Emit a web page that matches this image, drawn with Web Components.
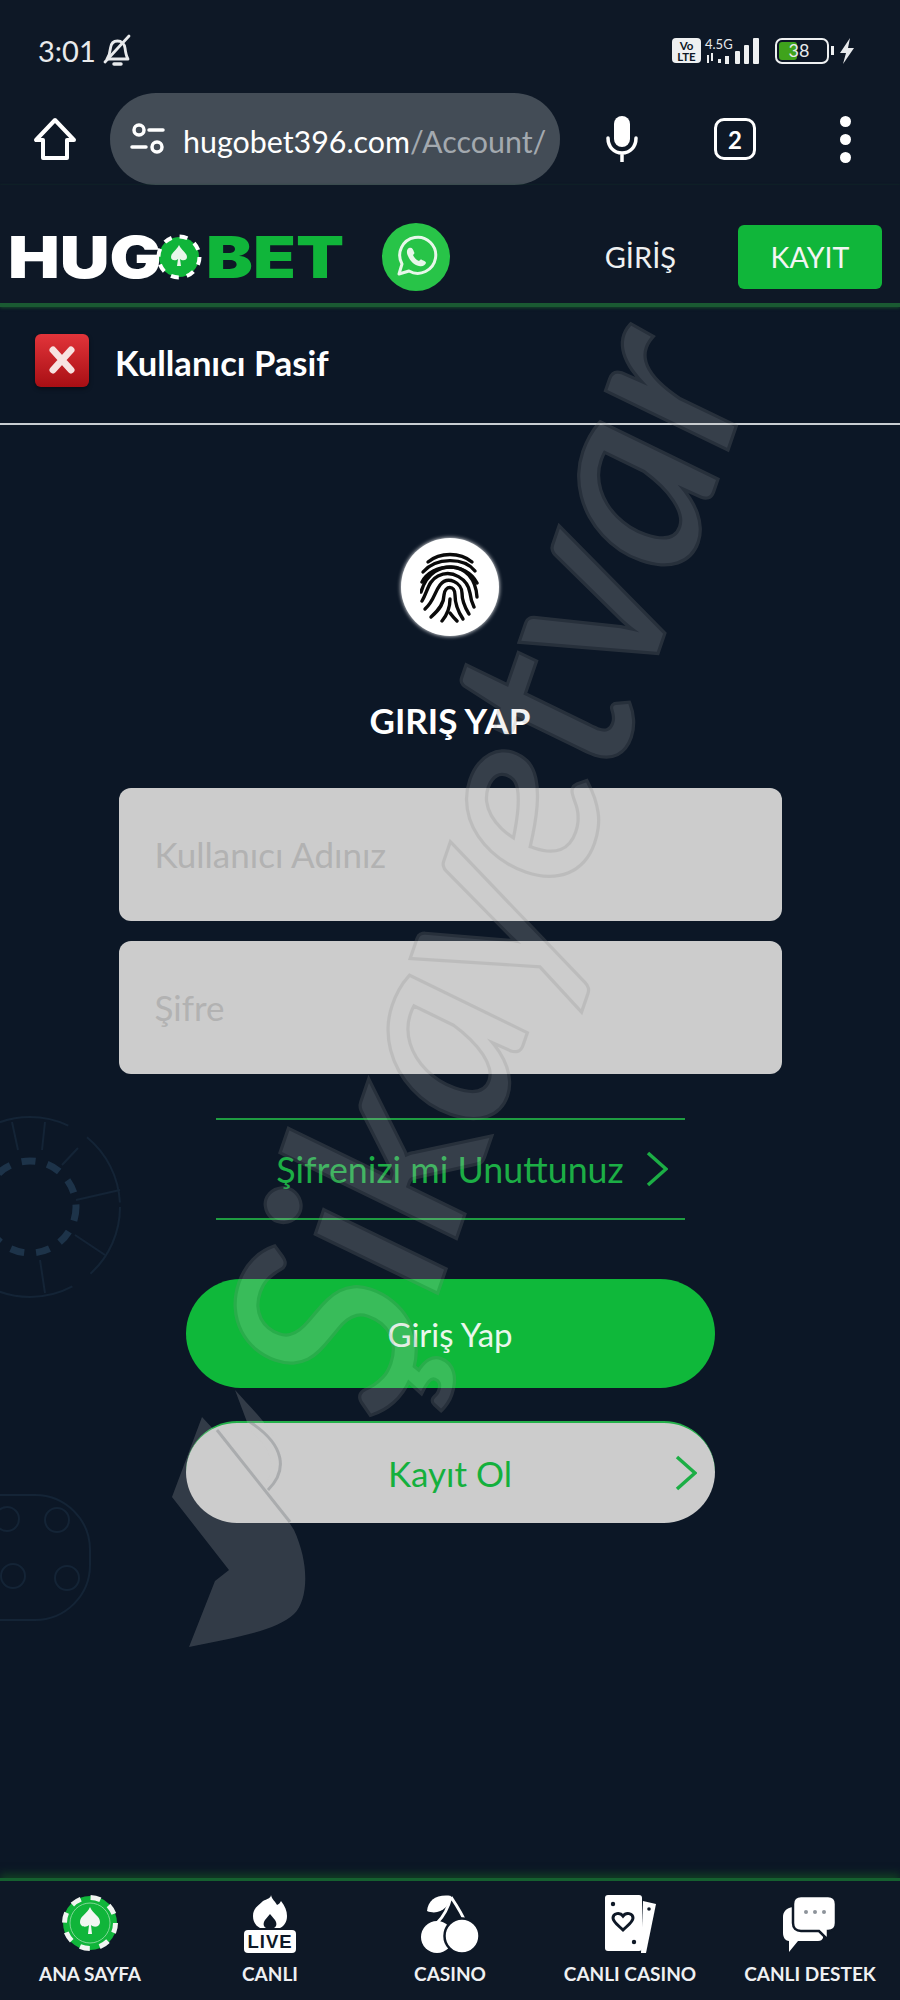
<!DOCTYPE html>
<html lang="tr">
<head>
<meta charset="utf-8">
<title>Hugobet</title>
<style>
  html, body { margin: 0; background: #0c1726; }
  body { width: 900px; height: 2000px; overflow: hidden; font-family: "Lato", "Noto Sans", sans-serif; color: #fff; }
  app-shell { height: 2000px; }
</style>
</head>
<body>
<app-shell>
  <status-bar></status-bar>
  <browser-bar></browser-bar>
  <site-header></site-header>
  <alert-row>Kullanıcı Pasif</alert-row>
  <login-form></login-form>
  <bottom-nav>
    <nav-item icon="chip">ANA SAYFA</nav-item>
    <nav-item icon="live">CANLI</nav-item>
    <nav-item icon="cherry">CASINO</nav-item>
    <nav-item icon="cards">CANLI CASINO</nav-item>
    <nav-item icon="chat">CANLI DESTEK</nav-item>
  </bottom-nav>
  <watermark-layer></watermark-layer>
</app-shell>

<script>
class AppShell extends HTMLElement {
  connectedCallback() {
    this.attachShadow({ mode: 'open' });
    this.shadowRoot.innerHTML = `
      <style>
        :host { display: flex; flex-direction: column; position: relative; width: 900px; overflow: hidden; }
      </style>
      <slot></slot>
    `;
  }
}

class StatusBar extends HTMLElement {
  connectedCallback() {
    this.attachShadow({ mode: 'open' });
    this.shadowRoot.innerHTML = `
      <style>
        :host { display: flex; align-items: center; justify-content: space-between; height: 93px; box-sizing: border-box; padding: 8px 45px 0 38px; background: #0e1826; color: #e8eaec; }
        .left { display: flex; align-items: center; gap: 6px; font-size: 29px; }
        .right { display: flex; align-items: center; }
        .volte { width: 29px; height: 25px; background: #eef0f1; border-radius: 4px; color: #0e1826; font-size: 11.500px; font-weight: 700; line-height: 11px; text-align: center; padding-top: 2px; box-sizing: border-box; }
        .net { display: flex; flex-direction: column; width: 30px; margin-left: 4px; font-size: 13px; line-height: 13px; }
        .bat { position: relative; width: 54px; height: 26px; margin-left: 13px; border: 2.500px solid #eef0f1; border-radius: 7px; box-sizing: border-box; font-size: 18px; line-height: 21px; text-align: center; overflow: hidden; padding-right: 6px; }
        .bat i { position: absolute; left: 2px; top: 2px; bottom: 2px; width: 18px; background: #3fa31c; border-radius: 3px; }
        .bat span { position: relative; }
        .nub { width: 3px; height: 9px; background: #eef0f1; margin: 0 5px 0 2px; }
      </style>
      <div class="left">
        <span>3:01</span>
        <svg width="32" height="34" viewBox="0 0 32 34" fill="none" stroke="#e8eaec" stroke-width="2.800" stroke-linejoin="round" stroke-linecap="round">
          <path d="M5 25c2-3 3-6 3.500-11 .5-4 3-7 7-7s7 3 7.500 7c.5 4 1 8 3 11z"/>
          <path d="M12 30h7" stroke-width="3.500"/>
          <path d="M3 28 27 2"/>
        </svg>
      </div>
      <div class="right">
        <div class="volte">Vo<br>LTE</div>
        <div class="net">
          <span>4.5G</span>
          <svg width="30" height="13" viewBox="0 0 30 13" fill="#eef0f1"><path d="M2 4h2v8H2zM6 2h2v8H6zM13 8h3v4h-3zM20 5h4v8h-4z"/></svg>
        </div>
        <svg width="27" height="26" viewBox="0 0 27 26" fill="#eef0f1"><rect x="0" y="13" width="5" height="13" rx="1"/><rect x="9" y="7" width="5" height="19" rx="1"/><rect x="18" y="0" width="6" height="26" rx="1"/></svg>
        <div class="bat"><i></i><span>38</span></div>
        <div class="nub"></div>
        <svg width="16" height="26" viewBox="0 0 16 26" fill="#e8eaec"><path d="M11 0 1 15h6l-3 11 11-16H9z"/></svg>
      </div>
    `;
  }
}

class BrowserBar extends HTMLElement {
  connectedCallback() {
    this.attachShadow({ mode: 'open' });
    this.shadowRoot.innerHTML = `
      <style>
        :host { display: flex; align-items: center; height: 92px; background: #0e1826; }
        .home { width: 110px; display: flex; justify-content: center; }
        .pill { width: 450px; height: 92px; box-sizing: border-box; border-radius: 46px; background: #434c56; display: flex; align-items: center; padding-left: 20px; overflow: hidden; }
        .url { margin-left: 17px; padding-top: 3px; font-size: 30.400px; white-space: nowrap; color: #fff; }
        .url span { color: #a3a9af; }
        .mic { margin-left: 44px; width: 36px; display: flex; justify-content: center; }
        .tabs { margin-left: 74px; width: 42px; height: 42px; box-sizing: border-box; border: 3.500px solid #fff; border-radius: 10px; display: flex; align-items: center; justify-content: center; font-size: 24px; font-weight: 700; }
        .dots { margin-left: 84px; display: flex; flex-direction: column; gap: 7px; }
        .dots i { width: 11px; height: 11px; border-radius: 50%; background: #fff; }
      </style>
      <div class="home">
        <svg width="44" height="44" viewBox="0 0 44 44" fill="none" stroke="#fff" stroke-width="4" stroke-linejoin="round"><path d="M22 3 3 23h7v18h24V23h7z"/></svg>
      </div>
      <div class="pill">
        <svg width="36" height="34" viewBox="0 0 36 34" fill="none" stroke="#fff" stroke-width="3.500" stroke-linecap="round"><circle cx="9" cy="8" r="5"/><path d="M19 8h14M2 25h14"/><circle cx="27" cy="25" r="5"/></svg>
        <div class="url">hugobet396.com<span>/Account/</span></div>
      </div>
      <div class="mic">
        <svg width="34" height="46" viewBox="0 0 34 46"><rect x="9" y="0" width="16" height="31" rx="8" fill="#fff"/><path d="M3 22c0 9 6 15 14 15s14-6 14-15M17 37v9" fill="none" stroke="#fff" stroke-width="3.500" stroke-linecap="round"/></svg>
      </div>
      <div class="tabs">2</div>
      <div class="dots"><i></i><i></i><i></i></div>
    `;
  }
}

class SiteHeader extends HTMLElement {
  connectedCallback() {
    this.attachShadow({ mode: 'open' });
    this.shadowRoot.innerHTML = `
      <style>
        :host { display: flex; align-items: center; height: 122px; box-sizing: border-box; padding: 25px 18px 0 8px; background: #0e1826; border-bottom: 4px solid #1a5a32; box-shadow: 0 1px 3px #15492a; position: relative; }
        .logo { display: flex; align-items: center; width: 337px; font-family: "Inter", "Liberation Sans", sans-serif; font-weight: 900; font-size: 58px; line-height: 46px; }
        .logo span { display: inline-block; transform-origin: left center; }
        .hug { color: #fff; width: 148px; transform: scaleX(1.19); }
        .bet { color: #10b53a; transform: scaleX(1.21); }
        .wa { margin-left: 37px; }
        .login { margin-left: auto; margin-right: 62px; font-size: 29px; color: #eef0f1; }
        .signup { width: 144px; height: 64px; border-radius: 6px; background: #10b63a; color: #f3f5f4; display: flex; align-items: center; justify-content: center; font-size: 28.500px; }
      </style>
      <div class="logo">
        <span class="hug">HUG</span>
        <svg width="46" height="46" viewBox="0 0 46 46" style="flex:none;margin:0 4px 0 0">
          <circle cx="23" cy="23" r="20" fill="#10b53a"/>
          <circle cx="23" cy="23" r="20.500" fill="none" stroke="#fff" stroke-width="4" stroke-dasharray="8 8.100"/>
          <path d="M23 11c3 6 8 8 8 12 0 4-5 4-7 2l1 7h-4l1-7c-2 2-7 2-7-2 0-4 5-6 8-12z" fill="#e9f6eb"/>
        </svg>
        <span class="bet">BET</span>
      </div>
      <svg class="wa" width="68" height="68" viewBox="0 0 68 68">
        <circle cx="34" cy="34" r="34" fill="#28c448"/>
        <path d="M17 51l3-10a18 18 0 1 1 7 7z" fill="none" stroke="#e8f7ea" stroke-width="3" stroke-linejoin="round"/>
        <path d="M27 25c-2 1-3 4-1 8 2 5 6 9 11 10 4 1 6-1 7-3 0-1-1-2-4-3-1-1-2 0-3 1-3-1-5-4-6-6 1-1 2-2 1-3-1-3-2-5-5-4z" fill="#e8f7ea"/>
      </svg>
      <div class="login">GİRİŞ</div>
      <div class="signup">KAYIT</div>
    `;
  }
}

class AlertRow extends HTMLElement {
  connectedCallback() {
    this.attachShadow({ mode: 'open' });
    this.shadowRoot.innerHTML = `
      <style>
        :host { display: flex; align-items: center; height: 118px; box-sizing: border-box; padding: 0 0 5px 35px; border-bottom: 2px solid #c9ced2; font-size: 34.500px; font-weight: 700; color: #fff; }
        .x { width: 54px; height: 53px; margin: -5px 26px 0 0; border-radius: 6px; background: linear-gradient(#e2343a, #a80f14); display: flex; align-items: center; justify-content: center; box-shadow: 0 2px 4px #0006; }
      </style>
      <div class="x">
        <svg width="28" height="28" viewBox="0 0 28 28" stroke="#f7e3e1" stroke-width="7" stroke-linecap="round"><path d="M5 4 23 24M23 4 5 24"/></svg>
      </div>
      <slot></slot>
    `;
  }
}

class LoginForm extends HTMLElement {
  connectedCallback() {
    this.attachShadow({ mode: 'open' });
    this.shadowRoot.innerHTML = `
      <style>
        :host { flex: 1; display: flex; flex-direction: column; align-items: center; padding-top: 113px; position: relative; background: #0c1726; }
        .deco { position: absolute; left: 0; top: 0; }
        .print { width: 98px; height: 98px; border-radius: 50%; background: #fff; display: flex; align-items: center; justify-content: center; box-shadow: 0 0 4px #fff; position: relative; }
        h2 { margin: 63px 0 0; font-size: 35px; line-height: 42px; font-weight: 700; color: #fff; position: relative; }
        .field { width: 663px; height: 133px; box-sizing: border-box; border-radius: 12px; background: #cccccc; padding: 0 0 2px 36px; display: flex; align-items: center; font-size: 35px; color: #b2b2b2; font-weight: 400; position: relative; }
        .user { margin-top: 47px; }
        .pass { margin-top: 20px; }
        .forgot { width: 469px; height: 102px; margin-top: 44px; box-sizing: border-box; border-top: 2px solid #1f9c41; border-bottom: 2px solid #1f9c41; display: flex; align-items: center; justify-content: center; gap: 22px; color: #1cae45; font-size: 35.800px; padding-left: 44px; position: relative; }
        .btn { width: 529px; box-sizing: border-box; display: flex; align-items: center; justify-content: center; font-size: 33px; position: relative; }
        .go { height: 109px; margin-top: 59px; border-radius: 55px; background: #0fb83a; color: #eaf7ec; }
        .join { height: 102px; margin-top: 33px; border-radius: 51px; background: #cccccc; border-top: 2px solid #24b04a; color: #14b03d; font-size: 35px; }
        .join svg { position: absolute; right: 18px; top: 32px; }
      </style>
      <svg class="deco" width="900" height="1455" viewBox="0 425 900 1455" fill="none">
        <g stroke="#142436" stroke-width="2">
          <circle cx="30" cy="1207" r="90" stroke-dasharray="75 22"/>
          <path d="M12 1122 18 1150M45 1122 42 1150M78 1148 62 1165M120 1190 76 1200M105 1255 75 1235M45 1293 40 1260"/>
          <rect x="-60" y="1495" width="150" height="125" rx="55"/>
          <circle cx="7" cy="1519" r="12"/><circle cx="57" cy="1520" r="12"/><circle cx="13" cy="1576" r="12"/><circle cx="67" cy="1578" r="12"/>
        </g>
        <circle cx="30" cy="1207" r="46" stroke="#1d3349" stroke-width="7" stroke-dasharray="14 12"/>
      </svg>
      <div class="print">
        <svg width="60" height="72" viewBox="0 0 60 72" fill="none" stroke="#0a0a0a" stroke-width="3.400" stroke-linecap="round">
          <path d="M8 11C20 1 40 1 52 11"/>
          <path d="M3 21C16 6 44 6 55 20"/>
          <path d="M2 31C12 12 46 10 57 32"/>
          <path d="M1 41C7 20 22 16 31 16 45 16 56 28 57 46"/>
          <path d="M2 50C8 40 8 30 18 25 32 18 48 28 50 42 51 50 53 54 54 56"/>
          <path d="M5 58C14 50 14 42 20 34 28 24 42 32 42 42 42 52 46 58 49 63"/>
          <path d="M11 66C20 58 24 52 24 44 25 34 35 34 35 44 35 54 39 62 43 68"/>
          <path d="M22 70C27 64 30 58 30 48"/>
          <path d="M30 62C33 66 35 68 37 70"/>
        </svg>
      </div>
      <h2>GIRIŞ YAP</h2>
      <div class="field user">Kullanıcı Adınız</div>
      <div class="field pass">Şifre</div>
      <div class="forgot">
        <span>Şifrenizi mi Unuttunuz</span>
        <svg width="22" height="36" viewBox="0 0 22 36" fill="none" stroke="#1cae45" stroke-width="3.500"><path d="M2 2 20 18 2 34"/></svg>
      </div>
      <div class="btn go">Giriş Yap</div>
      <div class="btn join">Kayıt Ol
        <svg width="22" height="36" viewBox="0 0 22 36" fill="none" stroke="#1cae45" stroke-width="3.500"><path d="M2 2 20 18 2 34"/></svg>
      </div>
    `;
  }
}

class BottomNav extends HTMLElement {
  connectedCallback() {
    this.attachShadow({ mode: 'open' });
    this.shadowRoot.innerHTML = `
      <style>
        :host { display: grid; grid-template-columns: repeat(5, 1fr); height: 122px; box-sizing: border-box; padding-top: 14px; background: #0e1826; border-top: 3px solid #15602f; box-shadow: 0 -4px 8px #123f24; position: relative; }
      </style>
      <slot></slot>
    `;
  }
}

const NAV_ICONS = {
  chip: `<svg width="56" height="56" viewBox="0 0 56 56">
      <circle cx="28" cy="28" r="27" fill="#10b53a"/>
      <circle cx="28" cy="28" r="25.500" fill="none" stroke="#f1f4f1" stroke-width="5" stroke-dasharray="10 10"/>
      <circle cx="28" cy="28" r="20" fill="none" stroke="#7fd695" stroke-width="1"/>
      <path d="M28 12c3 7 10 9 10 15 0 5-6 6-9 3l1 9h-4l1-9c-3 3-9 2-9-3 0-6 7-8 10-15z" fill="#f1f6f2"/>
    </svg>`,
  live: `<svg width="56" height="58" viewBox="0 0 56 58">
      <path d="M29 0c1 5 5 7 6 10 2-1 3-2 4-4 4 5 6 10 6 15 0 6-3 10-7 12h-6c3-2 3-5 1-8l-5-6-5 6c-2 3-2 6 1 8h-6c-4-2-7-6-7-12 0-8 6-11 10-15 4-2 8-3 8-6z" fill="#fff"/>
      <rect x="2" y="35" width="52" height="23" rx="4" fill="#fff"/>
      <text x="28" y="53" text-anchor="middle" font-family="Liberation Sans, sans-serif" font-weight="700" font-size="18.500" letter-spacing="1" fill="#0e1826">LIVE</text>
    </svg>`,
  cherry: `<svg width="60" height="58" viewBox="0 0 60 58">
      <path d="M7 16C8 5 17-1 31 1 30 12 19 21 7 16z" fill="#fff"/>
      <path d="M31 2c6 9 12 18 15 27M31 2C28 14 23 22 17 28" fill="none" stroke="#fff" stroke-width="3"/>
      <circle cx="17" cy="42" r="16" fill="#fff"/>
      <circle cx="42" cy="41" r="17.500" fill="#fff" stroke="#0e1826" stroke-width="2.500"/>
    </svg>`,
  cards: `<svg width="56" height="58" viewBox="0 0 56 58">
      <path d="M41 6 54 9 44 58h-5z" fill="#fff"/>
      <rect x="3" y="0" width="37" height="56" rx="3" fill="#fff"/>
      <path d="M21 35c-4-4-10-8-10-12 0-5 7-6 10-2 3-4 10-3 10 2 0 4-6 8-10 12z" fill="none" stroke="#0e1826" stroke-width="3"/>
      <circle cx="11" cy="9" r="2.200" fill="#0e1826"/><circle cx="32" cy="47" r="2.200" fill="#0e1826"/><circle cx="47" cy="14" r="1.800" fill="#0e1826"/>
    </svg>`,
  chat: `<svg width="56" height="58" viewBox="0 0 56 58">
      <path d="M11 12C4 13 1 17 1 22v16c0 5 3 8 6 8v11l9-11h20c3 0 4-1 5-3V12z" fill="#fff"/>
      <path d="M19 1h27c5 0 8 3 8 8v19c0 5-3 8-8 8v9l-9-9H19c-5 0-8-3-8-8V9c0-5 3-8 8-8z" fill="#fff" stroke="#0e1826" stroke-width="2.500"/>
      <circle cx="24" cy="17" r="2" fill="#8d939a"/><circle cx="33" cy="17" r="2" fill="#8d939a"/><circle cx="42" cy="17" r="2" fill="#8d939a"/>
    </svg>`
};

class NavItem extends HTMLElement {
  connectedCallback() {
    this.attachShadow({ mode: 'open' });
    this.shadowRoot.innerHTML = `
      <style>
        :host { display: flex; flex-direction: column; align-items: center; gap: 9px; font-size: 19px; font-weight: 700; line-height: 24px; color: #eef0f2; white-space: nowrap; }
        .ico { height: 58px; display: flex; align-items: flex-start; justify-content: center; }
      </style>
      <div class="ico">${NAV_ICONS[this.getAttribute('icon')]}</div>
      <slot></slot>
    `;
  }
}

// the complaint-site stamp lies over the whole page
class WatermarkLayer extends HTMLElement {
  connectedCallback() {
    this.attachShadow({ mode: 'open' });
    this.shadowRoot.innerHTML = `
      <style>
        :host { position: absolute; inset: 0; pointer-events: none; }
        svg { position: absolute; left: 0; top: 0; }
        .word { position: absolute; left: 392px; top: 1245px; transform-origin: 0 88.700%; transform: rotate(-71deg) scale(1.29, 1.3); font-family: "Lato", sans-serif; font-style: italic; font-size: 200px; line-height: 200px; font-weight: 400; color: #cccccc; -webkit-text-stroke: 5px #888888; paint-order: stroke fill; opacity: .22; white-space: nowrap; }
      </style>
      <svg width="900" height="2000" viewBox="0 0 900 2000" fill="none">
        <path fill="rgba(204,204,204,.2)" d="M235 1390 C262 1420 285 1440 281 1470 277 1480 272 1487 268 1490 L294 1530 C310 1565 308 1600 294 1614 275 1632 230 1638 189 1647 L215 1581 L229 1570 L172 1497 L202 1417 L265 1485 C278 1465 270 1448 250 1430z"/>
        <path stroke="rgba(120,125,130,.4)" stroke-width="3" d="M217 1430 290 1522M250 1422C285 1445 288 1470 268 1490"/>
      </svg>
      <div class="word">Şikayetvar</div>
    `;
  }
}

customElements.define('app-shell', AppShell);
customElements.define('status-bar', StatusBar);
customElements.define('browser-bar', BrowserBar);
customElements.define('site-header', SiteHeader);
customElements.define('alert-row', AlertRow);
customElements.define('login-form', LoginForm);
customElements.define('bottom-nav', BottomNav);
customElements.define('nav-item', NavItem);
customElements.define('watermark-layer', WatermarkLayer);
</script>
</body>
</html>
